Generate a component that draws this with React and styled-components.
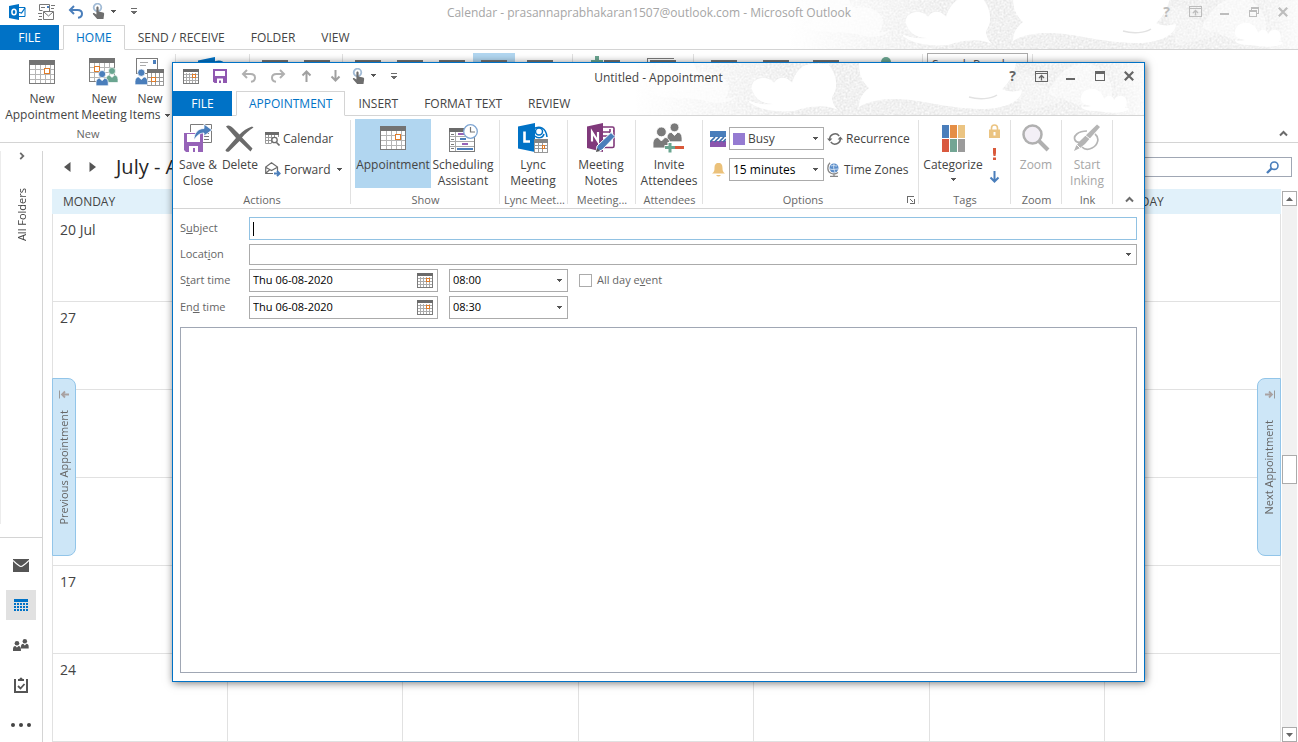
import React, { useId } from "react";
import styled, { createGlobalStyle, css } from "styled-components";

const BLUE = "#0072c6";
const GREY = "#6b6b6b";
const DAYS = ["MONDAY", "TUESDAY", "WEDNESDAY", "THURSDAY", "FRIDAY", "SATURDAY", "SUNDAY"];
const WEEKS = ["20 Jul", "27", "", "", "17", "24"];

/* ---------- icons ---------- */

const Caret = ({ color = "#555" }) => (
  <svg width="7" height="4" viewBox="0 0 7 4" shapeRendering="crispEdges" aria-hidden="true">
    <path d="M1 0h5v1h-1v1h-1v1h-1v-1h-1v-1h-1z" fill={color} />
  </svg>
);

const Chevron = ({ rotate = 0, size = 9 }) => (
  <svg width={size} height={size} viewBox="0 0 9 9" aria-hidden="true">
    <path d="M1 6.5 4.5 3 8 6.5" fill="none" stroke={GREY} strokeWidth="2" transform={`rotate(${rotate} 4.5 4.5)`} />
  </svg>
);

const CalendarIcon = () => (
  <svg width="26" height="24" viewBox="0 0 26 24" shapeRendering="crispEdges" aria-hidden="true">
    <path d="M0 0h26v24H0z" fill="#fff" />
    <path d="M6.5 5v18M11.5 5v18M16.5 5v18M21.5 5v18M1 9.5h24M1 14.5h24M1 19.5h24" stroke="#b5b5b5" />
    <path d="M.5 4.500V23.500h25V4.500" fill="none" stroke="#7b7b7b" />
    <path d="M0 0h26v5H0z" fill="#737373" />
    <path d="M15.500 8.500h5v5h-5z" fill="#fff" stroke="#e07b28" />
  </svg>
);

const SmallCalendarIcon = () => (
  <svg width="16" height="15" viewBox="0 0 16 15" shapeRendering="crispEdges" aria-hidden="true">
    <path d="M0 0h16v15H0z" fill="#fff" />
    <path d="M3.500 4v10M6.500 4v10M9.500 4v10M12.500 4v10M1 5.500h14M1 8.500h14M1 11.500h14" stroke="#ababab" />
    <path d="M.5 3v11.500h15V3" fill="none" stroke="#7b7b7b" />
    <path d="M0 0h16v3H0z" fill={GREY} />
    <path d="M9.500 5.500h3v3h-3z" fill="#fff" stroke="#e07b28" />
  </svg>
);

const UndoIcon = ({ color, flip }) => (
  <svg width="16" height="14" viewBox="0 0 16 14" fill="none" stroke={color} strokeWidth="2" aria-hidden="true">
    <g transform={flip ? "translate(16 0) scale(-1 1)" : undefined}>
      <path d="M6 1 2 5l4 4M2 5h7.500c3 0 4.500 1.500 4.500 3.800 0 2.200-1.700 3.700-4 4" />
    </g>
  </svg>
);

const TouchIcon = () => (
  <svg width="13" height="17" viewBox="0 0 13 17" aria-hidden="true">
    <circle cx="5.500" cy="4.500" r="3.800" fill="none" stroke="#a3bcd6" strokeWidth="1.800" />
    <path d="M4.400 4.500c0-1.500 2.200-1.500 2.200 0v4l4.400 1c1 .3 1.300 1 1.100 2L11.500 16H5.200L1 11.200c-.5-1 .6-1.600 1.400-1l2 1.300z" fill="#6e6e6e" />
  </svg>
);

const CustomizeIcon = () => (
  <svg width="8" height="7" viewBox="0 0 8 7" shapeRendering="crispEdges" aria-hidden="true">
    <path d="M1 0h6v1H1zM1 3h6v1H6v1H5v1H3V5H2V4H1z" fill={GREY} />
  </svg>
);

const SaveIcon = () => (
  <svg width="14" height="14" viewBox="0 0 14 14" aria-hidden="true">
    <path d="M0 0h14v14H1.500L0 12.500z" fill="#9058b0" />
    <path d="M2 2h10v5H2zM4 9.500h6V14H8v-2.500H6V14H4z" fill="#fff" />
  </svg>
);

const ArrowIcon = ({ color, down }) => (
  <svg width="11" height="12" viewBox="0 0 11 12" fill="none" stroke={color} strokeWidth="2" aria-hidden="true">
    <path d="M5.500 12V1.500M1.500 5.500l4-4 4 4" transform={down ? "rotate(180 5.500 6)" : undefined} />
  </svg>
);

const OutlookIcon = () => (
  <svg width="17" height="16" viewBox="0 0 17 16" aria-hidden="true">
    <path d="M9 3.500h7v9H9z" fill="#fff" stroke={BLUE} />
    <path d="m9 8 3.500 1L16 4" fill="none" stroke={BLUE} strokeWidth="1.300" />
    <path d="M0 2 10 0v16L0 14z" fill={BLUE} />
    <ellipse cx="5" cy="8" rx="2.100" ry="2.800" fill="none" stroke="#fff" strokeWidth="1.500" />
  </svg>
);

const SendReceiveIcon = () => (
  <svg width="17" height="16" viewBox="0 0 17 16" fill="none" stroke="#777" aria-hidden="true">
    <path d="M1.500.5h10v7M1.500.5v6h3M3 3.500h4M13 1.500h4M13 4.500h3M0 9.500h4M1 12.500h3M0 15.500h4" />
    <path d="M5.500 7.500h10v8h-10zM6 8l4.500 4L15 8" fill="#fff" />
    <path d="M9 2h2v2H9z" fill="#4a7ebb" stroke="none" />
  </svg>
);

const Person = ({ x, y, s = 1, color }) => (
  <g transform={`translate(${x} ${y}) scale(${s})`} fill={color}>
    <circle cx="6" cy="3.500" r="3.500" />
    <path d="M0 15V12c0-3 1.500-4.500 3.500-4.500L6 10l2.500-2.500C10.500 7.500 12 9 12 12v3z" />
  </g>
);

const NewMeetingIcon = () => (
  <svg width="30" height="28" viewBox="0 0 30 28" aria-hidden="true">
    <g shapeRendering="crispEdges">
      <path d="M5.500 5v18M10.500 5v18M15.500 5v18M20.500 5v18M1 9.500h24M1 14.500h24M1 19.500h24" stroke="#b5b5b5" />
      <path d="M.5 5v18.500h25V5" fill="none" stroke="#7b7b7b" />
      <path d="M0 0h26v5H0z" fill="#737373" />
      <path d="M5.500 8.500h5v5h-5z" fill="#fff" stroke="#e07b28" />
    </g>
    <g stroke="#fff" strokeWidth=".7">
      <Person x={17} y={9.500} s={1} color="#6aa590" />
      <Person x={7} y={12.500} s={1.020} color="#4a7ebb" />
    </g>
  </svg>
);

const NewItemsIcon = () => (
  <svg width="30" height="30" viewBox="0 0 30 30" aria-hidden="true">
    <g shapeRendering="crispEdges">
      <path d="M1.500 1.500h21v15h-21z" fill="#fff" stroke="#7b7b7b" />
      <path d="M5 5.500h8M5 8.500h6" stroke="#aaa" />
      <path d="M18 3h3v4h-3z" fill="#4a7ebb" />
      <path d="M12 12h17v17H12z" fill="#fff" />
      <path d="M12.500 15v13.500h16V15M16.500 16v12M20.500 16v12M24.500 16v12M13 20.500h15M13 24.500h15" fill="none" stroke="#9a9a9a" />
      <path d="M12 12h17v4H12z" fill="#737373" />
      <path d="M16.500 20.500h4v4h-4z" fill="#fff" stroke="#e07b28" />
    </g>
    <g stroke="#fff" strokeWidth=".7">
      <Person x={0} y={12} s={1.050} color="#4a7ebb" />
    </g>
  </svg>
);

const NewGroupIcon = () => (
  <svg width="30" height="32" viewBox="0 0 30 32" aria-hidden="true">
    <path d="M13 4h16v5H13z" fill="#737373" />
    <path d="M4 0h4v4h4v4H8v4H4V8H0V4h4z" fill="#6aa590" />
  </svg>
);

const StackedCalendarIcon = () => (
  <svg width="30" height="28" viewBox="0 0 30 28" shapeRendering="crispEdges" aria-hidden="true">
    <path d="M.5 24V.5H27" fill="none" stroke="#7b7b7b" />
    <path d="M3 2h26v5H3z" fill="#737373" />
    <path d="M3.500 7v20.500h25V7" fill="#fff" stroke="#7b7b7b" />
  </svg>
);

const PermissionsIcon = () => (
  <svg width="14" height="30" viewBox="0 0 14 30" aria-hidden="true">
    <circle cx="7" cy="5" r="5" fill="#6aa590" />
    <path d="M0 24v-8q2-4 7-4t7 4v8z" fill="#6aa590" />
  </svg>
);

const SaveCloseIcon = () => (
  <svg width="29" height="28" viewBox="0 0 29 28" aria-hidden="true">
    <path d="M6.500 8V.5h21v18H19M20 12.500h5M20 9.500h5M20 15.500h5" fill="none" stroke="#7b7b7b" />
    <path d="M0 9h19v19H2l-2-2z" fill="#9663b8" />
    <path d="M3 10h13v8H3zM5 22h9v6h-3v-4H9v4H5z" fill="#fff" />
    <path d="M10 16c0-7 4-11.500 10-11.500V0l8 6-8 6V9c-4 0-6.500 2-10 7z" fill="#4a7ebb" stroke="#fff" strokeWidth=".8" />
  </svg>
);

const DeleteIcon = () => (
  <svg width="30" height="27" viewBox="0 0 30 27" aria-hidden="true">
    <path d="M1 1.500C3-.3 5.500.5 8 3l6.500 6.500C18 6 22 3 27 1.500l1.500 1C24 5 20 9 17 12.500l10.500 11-2 3L14.500 16 4 26.500c-1.500.8-3.500 0-3.500-1.500L11 13z" fill="#6b6b6b" />
  </svg>
);

const CalendarSearchIcon = () => (
  <svg width="15" height="14" viewBox="0 0 15 14" aria-hidden="true">
    <path d="M.5 2v9.500h6M3.500 3v8M6.500 3v8M9.500 3v2M13.500 2v3M1 5.500h8M1 8.500h5" fill="none" stroke="#999" />
    <path d="M0 0h14v3H0z" fill={GREY} />
    <circle cx="9.500" cy="8" r="2.700" fill="#fff" stroke={GREY} strokeWidth="1.300" />
    <path d="m11.500 10.500 3 3" stroke={GREY} strokeWidth="1.600" />
  </svg>
);

const ForwardIcon = () => (
  <svg width="16" height="15" viewBox="0 0 16 15" aria-hidden="true">
    <path d="M8 11.500H.7V5L6.500.8 12.500 5v4M1 5.500l5.500 3 5.500-3M1 11l4-3.500" fill="none" stroke={GREY} strokeWidth="1.200" />
    <path d="M9 11.500h5M12 8.800l2.700 2.700-2.700 2.700" fill="none" stroke="#4a7ebb" strokeWidth="1.800" />
  </svg>
);

const SchedulingIcon = () => (
  <svg width="29" height="28" viewBox="0 0 29 28" aria-hidden="true">
    <g shapeRendering="crispEdges">
      <path d="M.5 5v22.500h25V5" fill="#fff" stroke="#7b7b7b" />
      <path d="M0 4h26v4H0z" fill={GREY} />
      <path d="M6.500 8v19M1 12.500h24M1 17.500h24M1 22.500h24" stroke="#aaa" />
      <path d="M2 10.500h3M2 15.500h3M2 20.500h3M2 24.500h3" stroke="#777" />
      <path d="M9 9h6v2H9zM13 19h6v2h-6z" fill="#9663b8" />
      <path d="M11 14h6v2h-6zM8 24h16v2H8z" fill="#4a7ebb" />
    </g>
    <circle cx="21.500" cy="7.500" r="6.800" fill="#fff" stroke="#7fa6d3" strokeWidth="1.300" />
    <path d="M21.500 3v5H26" fill="none" stroke="#777" strokeWidth="1.200" />
  </svg>
);

const LyncIcon = () => (
  <svg width="31" height="30" viewBox="0 0 31 30" aria-hidden="true">
    <path d="M15 6c7-4 13-1 14 8M17 13c3 3 8 2 9-2" fill="none" stroke={BLUE} strokeWidth="1.500" />
    <circle cx="21" cy="8.500" r="3.500" fill="#fff" stroke={BLUE} strokeWidth="1.500" />
    <path d="M0 3.500 17 0v29L0 25.500z" fill={BLUE} />
    <path d="M6.500 8.500v10H12" fill="none" stroke="#fff" strokeWidth="2.600" />
    <g shapeRendering="crispEdges">
      <path d="M16 16h14v14H16z" fill="#fff" />
      <path d="M16.500 19v10.500h13V19M20.500 20v9M24.500 20v9M17 22.500h12M17 25.500h12" fill="none" stroke="#999" />
      <path d="M16 16h14v4H16z" fill="#868686" />
      <path d="M24.500 22.500h2v3h-2z" fill="#fff" stroke="#e07b28" />
    </g>
  </svg>
);

const OneNoteIcon = () => (
  <svg width="29" height="30" viewBox="0 0 29 30" aria-hidden="true">
    <path d="M16 4h9.500q1.500 0 1.500 1.500V23q0 1.500-1.500 1.500H16M16 9h7M16 13h7M16 17h7M23 6v4M26 8h1M26 13h1" fill="none" stroke="#80397b" strokeWidth="1.600" />
    <path d="M0 3.500 16 0v29L0 25z" fill="#80397b" />
    <path d="M5 18.500V9l6 9.500V9" fill="none" stroke="#fff" strokeWidth="2.200" />
    <path d="m9 29 1-6L24 9.500l4 4L15 27z" fill="#4a7ebb" stroke="#fff" />
    <path d="m9 29 1-4 3 3z" fill="#555" />
  </svg>
);

const InviteIcon = () => (
  <svg width="32" height="30" viewBox="0 0 32 30" aria-hidden="true">
    <g stroke="#fff" strokeWidth=".6">
      <Person x={14} y={0} s={1.250} color="#7a7a7a" />
      <Person x={0} y={4} s={1.400} color="#7a7a7a" />
    </g>
    <path d="M17 19v11M11.500 24.500h11" stroke="#fff" strokeWidth="5" />
    <path d="M17 20v9.500M12 24.500h10" stroke="#6aa590" strokeWidth="3" />
    <path d="M22 24.500h9" stroke="#d9593a" strokeWidth="3" />
  </svg>
);

const ShowAsIcon = () => (
  <svg width="16" height="16" viewBox="0 0 16 16" aria-hidden="true">
    <path d="M0 0h16v6H0z" fill="#4a7ebb" />
    <path d="M0 10h16v6H0z" fill="#8a55ad" />
    <path d="m0 11 5-5M4.500 11l5-5M9 11l5-5M13 11l3-3" stroke="#3d6fab" strokeWidth="1.700" />
  </svg>
);

const BellIcon = () => (
  <svg width="13" height="14" viewBox="0 0 13 14" fill="#ebc17a" aria-hidden="true">
    <path d="M6.500 0C9.500 0 10.500 2 10.500 5s.5 4 2.500 5.500H0C2 9 2.500 8 2.500 5s1-5 4-5zM4 12h5q-2.500 3-5 0z" />
  </svg>
);

const RecurrenceIcon = () => (
  <svg width="16" height="14" viewBox="0 0 16 14" aria-hidden="true">
    <path d="M2.700 7.500a5.300 5.300 0 0 1 9.500-3.500M13.300 6.500a5.300 5.300 0 0 1-9.500 3.500" fill="none" stroke={GREY} strokeWidth="1.500" />
    <path d="M0 6.500h5.400L2.700 9.500zM10.600 7.500H16l-2.700-3z" fill={GREY} />
  </svg>
);

const GlobeIcon = () => (
  <svg width="14" height="15" viewBox="0 0 14 15" aria-hidden="true">
    <circle cx="7" cy="6" r="4.500" fill="#5b8dc9" />
    <path d="M4 4c2-1 4 0 6 0M3 7c3 1 5 0 8 0M7 2c-1 3 0 6 1 8" fill="none" stroke="#cfe0f2" />
    <path d="M3 .8C0 3.500 0 9 3.500 11c2.500 1.500 5.500 1 7.500-.5M7 12v2M3 14.300h8" fill="none" stroke="#888" strokeWidth="1.300" />
  </svg>
);

const CategorizeIcon = () => (
  <svg width="23" height="27" viewBox="0 0 23 27" aria-hidden="true">
    <path d="M0 0h7v13H0z" fill="#4a7ebb" />
    <path d="M8 0h7v13H8z" fill="#e58e45" />
    <path d="M16 0h7v13h-7z" fill="#ebc482" />
    <path d="M0 14h7v13H0z" fill="#d9593f" />
    <path d="M8 14h7v13H8z" fill="#73a594" />
    <path d="M16 14h7v13h-7z" fill="#9b9b9b" />
  </svg>
);

const LockIcon = () => (
  <svg width="11" height="14" viewBox="0 0 11 14" aria-hidden="true">
    <path d="M2.500 6V4c0-4 6-4 6 0v2" fill="none" stroke="#ebc482" strokeWidth="1.600" />
    <path d="M0 5.500h11V14H0z" fill="#ebc482" />
    <path d="M5.500 8v3.500" stroke="#fff" strokeWidth="2" />
  </svg>
);

const ImportantIcon = () => (
  <svg width="5" height="12" viewBox="0 0 5 12" fill="#d9593a" aria-hidden="true">
    <path d="M1 0h3v5l-.5 3h-2L1 5zM1 9.500h3V12H1z" />
  </svg>
);

const ZoomIcon = () => (
  <svg width="28" height="28" viewBox="0 0 28 28" aria-hidden="true">
    <path d="m17 17 9 9" stroke="#b0b0b0" strokeWidth="4" />
    <circle cx="10.500" cy="10.500" r="9" fill="#f3eff6" stroke="#b0b0b0" strokeWidth="2.500" />
  </svg>
);

const InkIcon = () => (
  <svg width="28" height="28" viewBox="0 0 28 28" aria-hidden="true">
    <path d="M14 7C5 7 0 12 2 16s8 2 10 0M22 10c5 4 3 11-3 14-4 2-8 1-10-1" fill="none" stroke="#b5b5b5" strokeWidth="1.700" />
    <path d="m1 27 2-5 4-5L24 .5 27 3 12 20l-5 4z" fill="#b5b5b5" />
    <path d="m12 11 5 4M4 21l3 3" stroke="#fff" />
  </svg>
);

const SearchIcon = () => (
  <svg width="13" height="13" viewBox="0 0 13 13" fill="none" stroke="#4a7ebb" aria-hidden="true">
    <circle cx="8.300" cy="4.700" r="3.700" strokeWidth="1.600" />
    <path d="M5.500 7.500 1 12" strokeWidth="2.400" />
  </svg>
);

const PopupIcon = () => (
  <svg width="13" height="11" viewBox="0 0 13 11" fill="none" stroke="currentColor" aria-hidden="true">
    <path d="M.5.5h12v10H.500zM.5 2.500h12" shapeRendering="crispEdges" />
    <path d="M6.500 9.500V5M4 7l2.500-2.500L9 7" strokeWidth="1.300" />
  </svg>
);
const MinimizeIcon = () => (
  <svg width="9" height="11" viewBox="0 0 9 11" aria-hidden="true">
    <path d="M0 7h9v2H0z" fill="currentColor" />
  </svg>
);
const MaximizeIcon = () => (
  <svg width="10" height="10" viewBox="0 0 10 10" shapeRendering="crispEdges" aria-hidden="true">
    <path d="M.5.5h9v9h-9z" fill="none" stroke="currentColor" />
    <path d="M0 0h10v3H0z" fill="currentColor" />
  </svg>
);
const RestoreIcon = () => (
  <svg width="10" height="10" viewBox="0 0 10 10" fill="none" stroke="currentColor" shapeRendering="crispEdges" aria-hidden="true">
    <path d="M.5 3.500h7v6h-7zM.5 4.500h7M2.500 3V.5h7v6H8M2.500 1.500h7" />
  </svg>
);
const CloseIcon = () => (
  <svg width="10" height="10" viewBox="0 0 10 10" aria-hidden="true">
    <path d="m.8.8 8.400 8.400M9.200.8.8 9.200" stroke="currentColor" strokeWidth="2.200" />
  </svg>
);
const HelpIcon = () => <HelpMark>?</HelpMark>;

const LauncherIcon = () => (
  <svg width="8" height="8" viewBox="0 0 8 8" fill="none" stroke={GREY} shapeRendering="crispEdges" aria-hidden="true">
    <path d="M.5 7V.5H7M3 3l3 3M7.500 3v4.500H3" />
  </svg>
);

const MailIcon = () => (
  <svg width="16" height="13" viewBox="0 0 16 13" aria-hidden="true">
    <path d="M0 0h16v13H0z" fill="#555" />
    <path d="M0 1.500c4 4 6 6 8 6s4-2 8-6" fill="none" stroke="#fff" strokeWidth="1.200" />
  </svg>
);
const NavCalendarIcon = () => (
  <svg width="14" height="12" viewBox="0 0 14 12" fill={BLUE} shapeRendering="crispEdges" aria-hidden="true">
    <path d="M0 0h14v3H0z" />
    {[4, 7, 10].map((y) =>
      [0, 3, 6, 9, 12].map((x) => <rect key={`${x}-${y}`} x={x} y={y} width="2" height="2" />)
    )}
  </svg>
);
const PeopleIcon = () => (
  <svg width="16" height="12" viewBox="0 0 16 12" aria-hidden="true">
    <Person x={8} y={0} s={0.640} color="#555" />
    <Person x={0} y={2} s={0.660} color="#555" />
  </svg>
);
const TasksIcon = () => (
  <svg width="14" height="16" viewBox="0 0 14 16" aria-hidden="true">
    <path d="M1 2v13h12V2" fill="none" stroke="#555" strokeWidth="2" />
    <path d="M4 4V2h1.500a1.500 1.500 0 0 1 3 0H10v2z" fill="#555" />
    <path d="m4 9 2.500 2.500L10.500 7" fill="none" stroke="#555" strokeWidth="1.800" />
  </svg>
);
const MoreIcon = () => (
  <svg width="20" height="4" viewBox="0 0 20 4" fill="#444" aria-hidden="true">
    <circle cx="2" cy="2" r="2" />
    <circle cx="10" cy="2" r="2" />
    <circle cx="18" cy="2" r="2" />
  </svg>
);
const JumpIcon = ({ flip }) => (
  <svg width="11" height="9" viewBox="0 0 11 9" aria-hidden="true">
    <g transform={flip ? "translate(11 0) scale(-1 1)" : undefined}>
      <path d="M.5.5v8" stroke="#999" />
      <path d="M10 4.500H3M6 1.500l-3 3 3 3" fill="none" stroke="#a9a2a2" strokeWidth="1.800" />
    </g>
  </svg>
);
const Triangle = ({ d }) => (
  <svg width="7" height="10" viewBox="0 0 7 10" aria-hidden="true">
    <path d={d} fill="#555" />
  </svg>
);

/* Grainy cloud artwork behind the title bars */
const Clouds = () => {
  const id = useId();
  return (
    <Sky width="510" height="52" viewBox="0 -3 510 52" aria-hidden="true">
      <defs>
        <linearGradient id={`${id}f`}>
          <stop offset="0" stopColor="#e7e7e7" stopOpacity="0" />
          <stop offset=".3" stopColor="#e7e7e7" />
          <stop offset=".7" stopColor="#e7e7e7" />
          <stop offset=".93" stopColor="#ebebeb" />
          <stop offset="1" stopColor="#f8f8f8" />
        </linearGradient>
        <filter id={`${id}n`} x="0" y="0" width="100%" height="100%">
          <feTurbulence type="fractalNoise" baseFrequency=".5" numOctaves="2" />
          <feColorMatrix values="0 0 0 0 1  0 0 0 0 1  0 0 0 0 1  1.600 0 0 0 -.4" />
        </filter>
      </defs>
      <path d="M0-3h510v52H0z" fill={`url(#${id}f)`} />
      <path d="M0-3h510v52H0z" filter={`url(#${id}n)`} />
      <g fill="#fff">
        <path d="M22-3h38c3 9 5 10 9 11 12-3 26 4 26 14 0 7-4 10-4 10 5 1 8-1 10-2-3 8-20 8-34 4C40 30 24 34 18 26c12-2 2-18 4-29z" opacity=".6" />
        <path d="M119 26c-4-6 1-14 10-14 5 0 9 2 11 5 4-7 13-7 18 0 3-10 9-19 20-19h16c9 10 11 24 4 33 0 5 2 9 6 13-14-6-28-4-44 1-20 2-42-3-46-11 8 4 16 5 26 4-10 0-18-4-21-12z" />
        <path d="M225-3h157c-2 12-8 21-14 26 6 3 12 3 20 1 0 11-18 20-42 19-38-1-58-10-86-10-15 0-28 3-35 8 0-9 4-14 10-19-6-6-10-12-10-25z" />
        <path d="M414 28c8-20 22-31 36-31 16 0 30 17 28 33l-30 10z" opacity=".5" />
        <path d="M378 10c14-8 22 0 22 8 12 0 22 8 28 18l-40 10z" opacity=".3" />
        <path d="M447 33c0-13 20-14 23 0 4-5 9-4 10 1 6-9 17-2 11 8 3 0 5 0 3 2-8 5-24 2-32 1-6 0-15-1-15-5 4 1 8 1 10 0-6-1-10-3-10-7z" />
      </g>
      <path d="M335 31c10 3 22 2 28-2" fill="none" stroke="#e2e2e2" strokeWidth="1.500" />
    </Sky>
  );
};

/* ---------- shared parts ---------- */

const Toolbar = ({ items }) => (
  <QuickAccess>
    {items.map(([label, icon]) => (
      <QuickButton key={label} type="button" aria-label={label}>
        {icon}
      </QuickButton>
    ))}
  </QuickAccess>
);

const WindowControls = ({ active }) => (
  <Controls $active={active}>
    <QuickButton type="button" aria-label="Help"><HelpIcon /></QuickButton>
    <QuickButton type="button" aria-label="Ribbon display options"><PopupIcon /></QuickButton>
    <QuickButton type="button" aria-label="Minimize"><MinimizeIcon /></QuickButton>
    <QuickButton type="button" aria-label={active ? "Maximize" : "Restore"}>
      {active ? <MaximizeIcon /> : <RestoreIcon />}
    </QuickButton>
    <QuickButton type="button" aria-label="Close"><CloseIcon /></QuickButton>
  </Controls>
);

const RibbonTabs = ({ tabs }) => (
  <Tabs>
    <FileTab type="button">FILE</FileTab>
    {tabs.map((tab, i) => (
      <Tab key={tab} type="button" $active={i === 0}>
        {tab}
      </Tab>
    ))}
  </Tabs>
);

const Command = ({ icon, lines = [], label, width, active, disabled, drop }) => (
  <BigButton type="button" aria-label={label} $width={width} $active={active} disabled={disabled}>
    <IconSlot>{icon}</IconSlot>
    {lines.map((line, i) => (
      <span key={line}>
        {line}
        {drop && lines.length > 1 && i === lines.length - 1 && <> <Caret /></>}
      </span>
    ))}
    {drop && lines.length === 1 && <CaretLine><Caret /></CaretLine>}
  </BigButton>
);

const Main = () => (
  <MainWindow>
    <Header>
      <Clouds />
      <TitleRow $height={25}>
        <Toolbar
          items={[
            ["Outlook", <OutlookIcon />],
            ["Send/Receive All", <SendReceiveIcon />],
            ["Undo", <UndoIcon color="#4a7ebb" />],
            ["Touch mode", <><TouchIcon /><Caret /></>],
            ["Customize", <CustomizeIcon />],
          ]}
        />
        <Title>Calendar - prasannaprabhakaran1507@outlook.com - Microsoft Outlook</Title>
        <WindowControls />
      </TitleRow>
      <RibbonTabs tabs={["HOME", "SEND / RECEIVE", "FOLDER", "VIEW"]} />
    </Header>
    <Ribbon>
      <Group $width={176}>
        <GroupBody>
          <Command icon={<CalendarIcon />} lines={["New", "Appointment"]} width={76} />
          <Command icon={<NewMeetingIcon />} lines={["New", "Meeting"]} width={48} />
          <Command icon={<NewItemsIcon />} lines={["New", "Items"]} width={44} drop />
        </GroupBody>
        <GroupLabel>New</GroupLabel>
      </Group>
      <Group $width={74}>
        <GroupBody>
          <Command icon={<LyncIcon />} label="New Lync Meeting" width={66} />
        </GroupBody>
      </Group>
      <Group $width={93}>
        <GroupBody>
          <Command icon={<CalendarIcon />} label="Today" width={42} />
          <Command icon={<CalendarIcon />} label="Next 7 Days" width={42} />
        </GroupBody>
      </Group>
      <Group $width={230}>
        <GroupBody>
          <Command icon={<CalendarIcon />} label="Day" width={42} />
          <Command icon={<CalendarIcon />} label="Work Week" width={42} />
          <Command icon={<CalendarIcon />} label="Week" width={42} />
          <Command icon={<CalendarIcon />} label="Month" width={42} active />
          <Command icon={<CalendarIcon />} label="Schedule View" width={50} />
        </GroupBody>
      </Group>
      <Group $width={121}>
        <GroupBody>
          <Command icon={<NewGroupIcon />} label="Open Calendar" width={58} />
          <Command icon={<StackedCalendarIcon />} label="Calendar Groups" width={54} />
        </GroupBody>
      </Group>
      <Group $width={229}>
        <GroupBody>
          <Command icon={<CalendarIcon />} label="E-mail Calendar" width={52} />
          <Command icon={<CalendarIcon />} label="Share Calendar" width={52} />
          <Command icon={<CalendarIcon />} label="Publish Online" width={48} />
          <Command icon={<PermissionsIcon />} label="Calendar Permissions" width={72} />
        </GroupBody>
      </Group>
      <Group $width={110}>
        <GroupBody>
          <PeopleSearch aria-label="Search People" placeholder="Search People" />
        </GroupBody>
      </Group>
      <Collapse type="button" aria-label="Collapse ribbon"><Chevron /></Collapse>
    </Ribbon>
    <Workspace>
      <Sidebar>
        <FolderPane>
          <FolderToggle type="button" aria-label="Expand folder pane"><Chevron rotate={90} size={8} /></FolderToggle>
          <VerticalText>All Folders</VerticalText>
        </FolderPane>
        <Nav>
          <NavButton type="button" aria-label="Mail"><MailIcon /></NavButton>
          <NavButton type="button" aria-label="Calendar" $active><NavCalendarIcon /></NavButton>
          <NavButton type="button" aria-label="People"><PeopleIcon /></NavButton>
          <NavButton type="button" aria-label="Tasks"><TasksIcon /></NavButton>
          <NavButton type="button" aria-label="More"><MoreIcon /></NavButton>
        </Nav>
      </Sidebar>
      <CalendarPane>
        <CalendarBar>
          <PageButton type="button" aria-label="Back"><Triangle d="M6.500 0v10L0 5z" /></PageButton>
          <PageButton type="button" aria-label="Forward"><Triangle d="M.5 0v10L7 5z" /></PageButton>
          <h1>July - August 2020</h1>
          <SearchBox>
            <input type="text" aria-label="Search Calendar" />
            <SearchIcon />
          </SearchBox>
        </CalendarBar>
        <CalendarBody>
          <Month>
            <thead>
              <tr>{DAYS.map((day) => <th key={day} scope="col">{day}</th>)}</tr>
            </thead>
            <tbody>
              {WEEKS.map((label, row) => (
                <tr key={row}>
                  {DAYS.map((day, col) => <td key={day}>{col === 0 ? label : ""}</td>)}
                </tr>
              ))}
            </tbody>
          </Month>
          <JumpTab type="button" $side="left">
            <JumpIcon />
            <VerticalText $small>Previous Appointment</VerticalText>
          </JumpTab>
          <JumpTab type="button" $side="right">
            <JumpIcon flip />
            <VerticalText $small>Next Appointment</VerticalText>
          </JumpTab>
          <Scrollbar>
            <ScrollButton type="button" aria-label="Scroll up">
              <svg width="7" height="4" viewBox="0 0 7 4"><path d="M0 4h7L3.500 0z" fill="#666" /></svg>
            </ScrollButton>
            <Track $grow={249} />
            <Thumb />
            <Track $grow={244} />
            <ScrollButton type="button" aria-label="Scroll down">
              <svg width="7" height="4" viewBox="0 0 7 4"><path d="M0 0h7L3.500 4z" fill="#666" /></svg>
            </ScrollButton>
          </Scrollbar>
        </CalendarBody>
      </CalendarPane>
    </Workspace>
  </MainWindow>
);

const DateField = ({ id, value }) => (
  <Field $width={189}>
    <input id={id} type="text" defaultValue={value} />
    <FieldButton type="button" aria-label="Pick a date"><SmallCalendarIcon /></FieldButton>
  </Field>
);

const TimeField = ({ label, value }) => (
  <Field $width={119}>
    <select aria-label={label} defaultValue={value}>
      <option>08:00</option>
      <option>08:30</option>
    </select>
    <Caret />
  </Field>
);

const AppointmentWindow = () => (
  <Dialog role="dialog" aria-label="Untitled - Appointment">
    <Header>
      <Clouds />
      <TitleRow $height={28}>
        <Toolbar
          items={[
            ["Appointment", <SmallCalendarIcon />],
            ["Save", <SaveIcon />],
            ["Undo", <UndoIcon color="#b0b0b0" />],
            ["Redo", <UndoIcon color="#b0b0b0" flip />],
            ["Previous item", <ArrowIcon color="#a0a0a0" />],
            ["Next item", <ArrowIcon color="#a0a0a0" down />],
            ["Touch mode", <><TouchIcon /><Caret /></>],
            ["Customize", <CustomizeIcon />],
          ]}
        />
        <Title $active>Untitled - Appointment</Title>
        <WindowControls active />
      </TitleRow>
      <RibbonTabs tabs={["APPOINTMENT", "INSERT", "FORMAT TEXT", "REVIEW"]} />
    </Header>
    <Ribbon>
      <Group $width={178}>
        <GroupBody>
          <Command icon={<SaveCloseIcon />} lines={["Save &", "Close"]} width={42} />
          <Command icon={<DeleteIcon />} lines={["Delete"]} width={42} />
          <SmallColumn>
            <SmallButton type="button"><CalendarSearchIcon />Calendar</SmallButton>
            <SmallButton type="button"><ForwardIcon />Forward<i><Caret /></i></SmallButton>
          </SmallColumn>
        </GroupBody>
        <GroupLabel>Actions</GroupLabel>
      </Group>
      <Group $width={149}>
        <GroupBody>
          <Command icon={<CalendarIcon />} lines={["Appointment"]} width={76} active />
          <Command icon={<SchedulingIcon />} lines={["Scheduling", "Assistant"]} width={64} />
        </GroupBody>
        <GroupLabel>Show</GroupLabel>
      </Group>
      <Group $width={68}>
        <GroupBody>
          <Command icon={<LyncIcon />} lines={["Lync", "Meeting"]} width={58} />
        </GroupBody>
        <GroupLabel>Lync Meet...</GroupLabel>
      </Group>
      <Group $width={68}>
        <GroupBody>
          <Command icon={<OneNoteIcon />} lines={["Meeting", "Notes"]} width={58} />
        </GroupBody>
        <GroupLabel>Meeting...</GroupLabel>
      </Group>
      <Group $width={67}>
        <GroupBody>
          <Command icon={<InviteIcon />} lines={["Invite", "Attendees"]} width={58} />
        </GroupBody>
        <GroupLabel>Attendees</GroupLabel>
      </Group>
      <Group $width={216}>
        <GroupBody>
          <SmallColumn $tight>
            <OptionRow>
              <ShowAsIcon />
              <Field $width={95}>
                <Swatch />
                <select aria-label="Show as" defaultValue="Busy">
                  <option>Free</option>
                  <option>Busy</option>
                </select>
                <Caret />
              </Field>
            </OptionRow>
            <OptionRow>
              <BellIcon />
              <Field $width={95} $dark>
                <select aria-label="Reminder" defaultValue="15 minutes">
                  <option>None</option>
                  <option>15 minutes</option>
                </select>
                <Caret />
              </Field>
            </OptionRow>
          </SmallColumn>
          <SmallColumn $tight>
            <SmallButton type="button"><RecurrenceIcon />Recurrence</SmallButton>
            <SmallButton type="button"><GlobeIcon />Time Zones</SmallButton>
          </SmallColumn>
        </GroupBody>
        <GroupLabel $launcher>
          Options
          <Launcher type="button" aria-label="More options"><LauncherIcon /></Launcher>
        </GroupLabel>
      </Group>
      <Group $width={92}>
        <GroupBody>
          <Command icon={<CategorizeIcon />} lines={["Categorize"]} width={60} drop />
          <TagColumn>
            <button type="button" aria-label="Private"><LockIcon /></button>
            <button type="button" aria-label="High importance"><ImportantIcon /></button>
            <button type="button" aria-label="Low importance"><ArrowIcon color="#4a7ebb" down /></button>
          </TagColumn>
        </GroupBody>
        <GroupLabel>Tags</GroupLabel>
      </Group>
      <Group $width={51}>
        <GroupBody>
          <Command icon={<ZoomIcon />} lines={["Zoom"]} width={42} disabled />
        </GroupBody>
        <GroupLabel>Zoom</GroupLabel>
      </Group>
      <Group $width={51}>
        <GroupBody>
          <Command icon={<InkIcon />} lines={["Start", "Inking"]} width={42} disabled />
        </GroupBody>
        <GroupLabel>Ink</GroupLabel>
      </Group>
      <Collapse type="button" aria-label="Collapse ribbon"><Chevron /></Collapse>
    </Ribbon>
    <Form>
      <FormRow>
        <label htmlFor="subject">S<u>u</u>bject</label>
        <Field $focused>
          <TextCaret />
          <input id="subject" type="text" />
        </Field>
      </FormRow>
      <FormRow>
        <label htmlFor="location">Locat<u>i</u>on</label>
        <Field $short>
          <input id="location" type="text" />
          <Caret />
        </Field>
      </FormRow>
      <FormRow>
        <label htmlFor="start">S<u>t</u>art time</label>
        <DateField id="start" value="Thu 06-08-2020" />
        <TimeField label="Start hour" value="08:00" />
        <CheckLabel>
          <input type="checkbox" />
          <span>All day e<u>v</u>ent</span>
        </CheckLabel>
      </FormRow>
      <FormRow>
        <label htmlFor="end">En<u>d</u> time</label>
        <DateField id="end" value="Thu 06-08-2020" />
        <TimeField label="End hour" value="08:30" />
      </FormRow>
      <Notes aria-label="Appointment notes" />
    </Form>
  </Dialog>
);

const App = () => (
  <>
    <GlobalStyle />
    <Main />
    <AppointmentWindow />
  </>
);

/* ---------- styles ---------- */

const GlobalStyle = createGlobalStyle`
  * {
    box-sizing: border-box;
  }
  body {
    margin: 0;
    overflow: hidden;
    background: #fff;
    color: #444;
    font-family: "Open Sans", "Noto Sans", sans-serif;
    font-size: 12px;
    line-height: 16px;
  }
  button, input, select, textarea {
    margin: 0;
    padding: 0;
    border: 0;
    background: none;
    color: inherit;
    font: inherit;
    outline: none;
  }
  svg {
    flex: none;
  }
`;

const MainWindow = styled.main`
  display: flex;
  flex-direction: column;
  height: 100vh;
`;

const Dialog = styled.section`
  position: absolute;
  top: 62px;
  right: 153px;
  bottom: 60px;
  left: 172px;
  display: flex;
  flex-direction: column;
  background: #fff;
  border: 1px solid ${BLUE};
  box-shadow: 1px 1px 8px rgba(0, 0, 0, 0.55);
`;

const Header = styled.header`
  position: relative;
  overflow: hidden;
  flex: none;
`;

const Sky = styled.svg`
  position: absolute;
  right: 0;
  bottom: 1px;
`;

const TitleRow = styled.div`
  position: relative;
  display: grid;
  grid-template-columns: 1fr auto 1fr;
  height: ${(p) => p.$height}px;
`;

const Title = styled.div`
  align-self: center;
  padding-top: 1px;
  color: ${(p) => (p.$active ? "#444" : "#a6a6a6")};
`;

const QuickAccess = styled.div`
  display: flex;
  padding: 0 0 2px 3px;
`;

const Controls = styled.div`
  display: flex;
  justify-content: flex-end;
  padding: 0 1px 2px 0;
  color: ${(p) => (p.$active ? "#666" : "#bdbdbd")};
`;

const QuickButton = styled.button`
  display: flex;
  align-items: center;
  justify-content: center;
  gap: 5px;
  width: 29px;
`;

const HelpMark = styled.b`
  font-size: 14px;
`;

const Tabs = styled.nav`
  position: relative;
  display: flex;
  height: 25px;
  border-bottom: 1px solid #d4d4d4;
`;

const Tab = styled.button`
  height: 25px;
  padding: 0 12px;
  border: 1px solid transparent;

  ${(p) =>
    p.$active &&
    css`
      color: ${BLUE};
      background: #fff;
      border-color: #d4d4d4;
      border-bottom-color: #fff;
    `}
`;

const FileTab = styled.button`
  width: 59px;
  height: 25px;
  margin-right: 4px;
  color: #fff;
  background: ${BLUE};
`;

const Ribbon = styled.div`
  display: flex;
  flex: none;
  height: 93px;
  border-bottom: 1px solid #d4d4d4;
`;

const Group = styled.div`
  display: flex;
  flex: none;
  flex-direction: column;
  justify-content: space-between;
  width: ${(p) => p.$width}px;
  padding: 3px 0 0 4px;
  background: linear-gradient(#e1e1e1, #e1e1e1) right 4px / 1px 84px no-repeat;
  background-position: right 0 top 4px;
`;

const GroupBody = styled.div`
  display: flex;
  height: 69px;
`;

const GroupLabel = styled.div`
  position: relative;
  height: 16px;
  margin-right: 4px;
  padding-right: ${(p) => (p.$launcher ? 16 : 0)}px;
  color: #666;
  font-size: 11px;
  text-align: center;
  white-space: nowrap;
`;

const Launcher = styled.button`
  position: absolute;
  right: 0;
  bottom: 0;
  display: flex;
  align-items: center;
  height: 16px;
`;

const BigButton = styled.button`
  display: flex;
  flex: none;
  flex-direction: column;
  align-items: center;
  width: ${(p) => p.$width}px;
  height: 69px;
  white-space: nowrap;
  background: ${(p) => (p.$active ? "#b1d6f0" : "none")};

  &:disabled {
    color: #a6a6a6;
  }

  span {
    flex: none;
    height: 16px;
  }

  span svg {
    vertical-align: middle;
  }
`;

const IconSlot = styled.div`
  display: flex;
  flex: none;
  align-items: center;
  justify-content: center;
  height: 38px;
`;

const CaretLine = styled.div`
  display: flex;
  align-items: center;
  height: 14px;
`;

const SmallColumn = styled.div`
  display: flex;
  flex-direction: column;
  gap: 8px;
  padding: 8px 0 0 ${(p) => (p.$tight ? 3 : 4)}px;
`;

const SmallButton = styled.button`
  display: flex;
  align-items: center;
  gap: 3px;
  height: 23px;
  white-space: nowrap;

  i {
    display: flex;
    margin-left: 2px;
  }
`;

const OptionRow = styled.div`
  display: grid;
  grid-template-columns: 16px auto;
  gap: 3px;
  align-items: center;
  justify-items: center;
`;

const TagColumn = styled.div`
  display: flex;
  flex-direction: column;
  width: 22px;

  button {
    display: flex;
    align-items: center;
    justify-content: center;
    height: 23px;
  }
`;

const Swatch = styled.span`
  flex: none;
  width: 12px;
  height: 12px;
  background: #957bd2;
`;

const Collapse = styled.button`
  align-self: flex-end;
  width: 30px;
  height: 16px;
  margin-left: auto;
`;

const PeopleSearch = styled.input`
  width: 101px;
  height: 22px;
  padding: 0 4px;
  border: 1px solid #ababab;

  &::placeholder {
    color: #555;
  }
`;

const Field = styled.div`
  position: relative;
  display: flex;
  align-items: center;
  flex: ${(p) => (p.$width ? "none" : "1")};
  width: ${(p) => (p.$width ? `${p.$width}px` : "auto")};
  height: ${(p) => (p.$short ? 21 : 23)}px;
  padding: 0 4px 0 3px;
  color: ${(p) => (p.$dark ? "#000" : "inherit")};
  background: #fff;
  border: 1px solid ${(p) => (p.$focused ? "#91c2e3" : "#ababab")};

  input, select {
    flex: 1;
    min-width: 0;
    height: 100%;
    appearance: none;
  }

  ${Swatch} + select {
    padding-left: 3px;
  }
`;

const FieldButton = styled.button`
  display: flex;
`;

const TextCaret = styled.span`
  width: 1px;
  height: 14px;
  background: #000;
`;

const Form = styled.form`
  display: flex;
  flex: 1;
  flex-direction: column;
  padding: 8px 7px;
  font-size: 11px;

  ${Field} {
    color: #000;
  }

  ${Field} input, ${Field} select {
    padding-bottom: 2px;
  }
`;

const FormRow = styled.div`
  display: flex;
  align-items: center;
  margin-bottom: 4px;

  > label {
    padding-bottom: 1px;
    color: #666;
  }

  > label:first-child {
    width: 69px;
  }

  ${Field} + ${Field} {
    margin-left: 11px;
  }
`;

const CheckLabel = styled.label`
  display: flex;
  align-items: center;
  gap: 5px;
  margin-left: 11px;

  input {
    width: 13px;
    height: 13px;
    border: 1px solid #ababab;
    appearance: none;
  }
`;

const Notes = styled.textarea`
  flex: 1;
  margin-top: 4px;
  border: 1px solid #a0a7b4;
  resize: none;
`;

const Workspace = styled.div`
  display: grid;
  grid-template-columns: 43px 1fr;
  flex: 1;
  min-height: 0;
`;

const Sidebar = styled.aside`
  display: flex;
  flex-direction: column;
  margin-top: 8px;
  border-right: 1px solid #d4d4d4;
`;

const FolderPane = styled.div`
  display: flex;
  flex: 1;
  flex-direction: column;
  align-items: center;
  gap: 28px;
  margin-bottom: 13px;
  border-left: 1px solid #ececec;
`;

const FolderToggle = styled.button`
  display: flex;
  padding-top: 1px;
`;

const VerticalText = styled.span`
  color: ${(p) => (p.$small ? "#666" : "#444")};
  font-size: 11px;
  white-space: nowrap;
  writing-mode: vertical-rl;
  transform: rotate(180deg);
`;

const Nav = styled.nav`
  display: flex;
  flex-direction: column;
  align-items: center;
  gap: 10px;
  padding: 12px 0 2px;
  border-top: 1px solid #d4d4d4;
`;

const NavButton = styled.button`
  display: flex;
  align-items: center;
  justify-content: center;
  width: 30px;
  height: 30px;
  background: ${(p) => (p.$active ? "#e1e1e1" : "none")};
`;

const CalendarPane = styled.section`
  display: flex;
  flex-direction: column;
  min-width: 0;
  padding-left: 9px;
`;

const CalendarBar = styled.div`
  display: flex;
  align-items: center;
  height: 46px;
  padding: 2px 6px 0 12px;

  h1 {
    flex: 1;
    margin: 0 0 0 8px;
    color: #262626;
    font-size: 20px;
    font-weight: 400;
    line-height: 24px;
  }
`;

const PageButton = styled.button`
  display: flex;
  margin-right: 18px;

  & + & {
    margin-right: 12px;
  }
`;

const SearchBox = styled.div`
  display: flex;
  align-items: center;
  width: 300px;
  height: 20px;
  padding-right: 12px;
  border: 1px solid #a0a7b4;

  input {
    flex: 1;
    min-width: 0;
  }
`;

const CalendarBody = styled.div`
  position: relative;
  display: flex;
  flex: 1;
  min-height: 0;
`;

const Month = styled.table`
  flex: 1;
  width: 100%;
  height: 100%;
  border-spacing: 0;
  table-layout: fixed;

  th {
    height: 25px;
    padding: 0 11px;
    background: #e1f1fa;
    font-weight: 400;
    text-align: left;
  }

  td {
    height: 88px;
    padding: 6px 7px;
    border-right: 1px solid #e1e1e1;
    border-bottom: 1px solid #e1e1e1;
    font-size: 14px;
    line-height: 20px;
    vertical-align: top;
  }

  td:first-child {
    border-left: 1px solid #e1e1e1;
  }
`;

const JumpTab = styled.button`
  position: absolute;
  top: 189px;
  left: ${(p) => (p.$side === "left" ? "0" : "auto")};
  right: ${(p) => (p.$side === "right" ? "17px" : "auto")};
  display: flex;
  flex-direction: column;
  align-items: center;
  width: 24px;
  height: 178px;
  padding: 11px 0 20px;
  background: #cde6f7;
  border: 1px solid #92c5e9;
  border-radius: ${(p) => (p.$side === "left" ? "0 8px 8px 0" : "8px 0 0 8px")};

  ${VerticalText} {
    margin: auto 0;
  }
`;

const Scrollbar = styled.div`
  display: flex;
  flex: none;
  flex-direction: column;
  width: 17px;
  padding: 2px 1px 0 1px;
`;

const ScrollButton = styled.button`
  display: flex;
  align-items: center;
  justify-content: center;
  height: 15px;
  background: #fff;
  border: 1px solid #ababab;
`;

const Track = styled.div`
  flex: ${(p) => p.$grow};
  background: #f1f1f1;
`;

const Thumb = styled.div`
  height: 29px;
  background: #fff;
  border: 1px solid #ababab;
`;

export default App;
